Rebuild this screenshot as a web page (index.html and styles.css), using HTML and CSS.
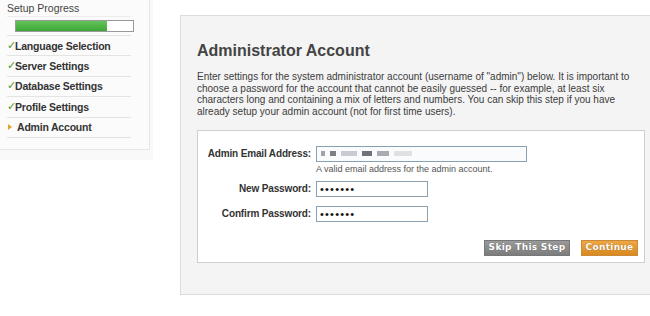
FILE: index.html
```html
<!DOCTYPE html>
<html lang="en">
<head>
    <meta charset="UTF-8">
    <title>Setup - Admin Account</title>
    <link rel="stylesheet" href="styles.css">
</head>
<body>
    <div class="page">
        <div class="sidebar-wrap">
            <div class="sidebar">
                <div class="progress-title">Setup Progress</div>
                <div class="progress-row">
                    <div class="progress-bar"><div class="progress-fill" style="width: 78%"></div></div>
                </div>
                <ul class="steps">
                    <li class="done"><span class="mark">&#10003;</span>Language Selection</li>
                    <li class="done"><span class="mark">&#10003;</span>Server Settings</li>
                    <li class="done"><span class="mark">&#10003;</span>Database Settings</li>
                    <li class="done"><span class="mark">&#10003;</span>Profile Settings</li>
                    <li class="current"><span class="arrow"></span>Admin Account</li>
                </ul>
            </div>
        </div>

        <div class="main">
            <h1>Administrator Account</h1>
            <p class="intro">Enter settings for the system administrator account (username of "admin") below. It is important to choose a password for the account that cannot be easily guessed -- for example, at least six characters long and containing a mix of letters and numbers. You can skip this step if you have already setup your admin account (not for first time users).</p>

            <form class="card">
                <div class="field field-email">
                    <label>Admin Email Address:</label>
                    <div class="input-col">
                        <div class="input email">
                            <span class="blur b1"></span><span class="blur b2"></span><span class="blur b3"></span><span class="blur b4"></span><span class="blur b5"></span><span class="blur b6"></span>
                        </div>
                        <div class="hint">A valid email address for the admin account.</div>
                    </div>
                </div>
                <div class="field">
                    <label>New Password:</label>
                    <div class="input-col">
                        <div class="input pass">&bull;&bull;&bull;&bull;&bull;&bull;&bull;</div>
                    </div>
                </div>
                <div class="field">
                    <label>Confirm Password:</label>
                    <div class="input-col">
                        <div class="input pass">&bull;&bull;&bull;&bull;&bull;&bull;&bull;</div>
                    </div>
                </div>
                <div class="actions">
                    <button type="button" class="btn btn-skip">Skip This Step</button>
                    <button type="button" class="btn btn-continue">Continue</button>
                </div>
            </form>
        </div>
    </div>
</body>
</html>
```

FILE: styles.css
```css
body {
    margin: 0;
    background: #fff;
    font-family: "Liberation Sans", Arial, sans-serif;
    font-size: 10px;
    color: #333;
    overflow: hidden;
}
.page {
    display: flex;
    align-items: flex-start;
}
.sidebar-wrap {
    width: 153px;
    height: 160px;
    background: #f9f9f9;
    flex-shrink: 0;
}
.sidebar {
    width: 150px;
    height: 150px;
    background: #fbfbfb;
    border-right: 1px solid #e6e6e6;
    border-bottom: 1px solid #e6e6e6;
    box-sizing: border-box;
    padding: 0 18px 0 7px;
}
.progress-title {
    height: 16px;
    line-height: 17px;
    border-bottom: 1px solid #ececec;
    color: #444;
    font-size: 10.5px;
}
.progress-row {
    height: 19px;
    padding: 3px 0 0 8px;
    border-bottom: 1px solid #e4e4e4;
    box-sizing: border-box;
}
.progress-bar {
    width: 117px;
    height: 10px;
    border: 1px solid #999;
    background: #fff;
}
.progress-fill {
    height: 100%;
    background: linear-gradient(#63c45a, #3fa63a);
}
.steps {
    list-style: none;
    margin: 0;
    padding: 0;
}
.steps li {
    height: 19.4px;
    line-height: 20px;
    border-bottom: 1px solid #e4e4e4;
    font-weight: bold;
    font-size: 10.5px;
    letter-spacing: -0.2px;
    color: #333;
    display: flex;
    align-items: center;
}
.mark {
    color: #4f9a2a;
    font-size: 11px;
    font-weight: bold;
    width: 8px;
    font-family: "DejaVu Sans", sans-serif;
    letter-spacing: 0;
}
.arrow {
    width: 0;
    height: 0;
    border-left: 4px solid #e6a12b;
    border-top: 3px solid transparent;
    border-bottom: 3px solid transparent;
    margin: 0 5px 0 1px;
}
.main {
    margin: 15px 0 0 27px;
    width: 478px;
    flex-shrink: 0;
    background: #f4f4f4;
    border: 1px solid #dcdcdc;
    padding: 25px 0 31px 16px;
}
h1 {
    margin: 0;
    font-size: 16px;
    color: #444;
    line-height: 20px;
}
.intro {
    margin: 10px 0 12px 0;
    width: 448px;
    line-height: 11.7px;
    color: #3c3c3c;
}
.card {
    width: 448px;
    height: 133px;
    box-sizing: border-box;
    background: #fff;
    border: 1px solid #cfcfcf;
    padding: 15px 6px 0 0;
}
.field {
    display: flex;
    align-items: flex-start;
    margin-bottom: 9px;
}
.field-email {
    margin-bottom: 6px;
}
.field label {
    width: 113px;
    white-space: nowrap;
    text-align: right;
    font-weight: bold;
    letter-spacing: -0.15px;
    color: #333;
    line-height: 15px;
    padding-right: 5px;
}
.input {
    height: 16px;
    box-sizing: border-box;
    border: 1px solid #8aa0b0;
    background: #fff;
}
.email {
    width: 211px;
    background: #f9fbfc;
    display: flex;
    align-items: center;
    padding-left: 4px;
    gap: 5px;
}
.blur {
    display: inline-block;
    height: 5px;
    background: #c8ccd0;
}
.b1 { width: 4px; background: #a0a4a8; }
.b2 { width: 6px; background: #7d8085; }
.b3 { width: 16px; }
.b4 { width: 10px; background: #6f7378; }
.b5 { width: 12px; background: #a8acb0; }
.b6 { width: 18px; background: #dfe2e5; }
.hint {
    color: #555;
    font-size: 9px;
    margin-top: 2px;
    line-height: 11px;
}
.pass {
    width: 112px;
    font-size: 11px;
    line-height: 14px;
    padding-left: 3px;
    letter-spacing: 1.2px;
    color: #111;
}
.actions {
    display: flex;
    justify-content: flex-end;
    gap: 11px;
    margin-top: 18px;
}
.btn {
    height: 16px;
    border: 1px solid #888;
    font-family: "DejaVu Sans", Verdana, sans-serif;
    font-size: 9px;
    font-weight: bold;
    letter-spacing: 0.3px;
    color: #fff;
    padding: 0;
    line-height: 13px;
    white-space: nowrap;
    cursor: pointer;
    text-shadow: 0 0 1px rgba(0,0,0,0.4);
}
.btn-skip {
    width: 86px;
    background: linear-gradient(#9a9a9a, #7c7c7c);
    border-color: #777;
}
.btn-continue {
    width: 57px;
    background: linear-gradient(#eea645, #d98a20);
    border-color: #c98a3a;
}
```
